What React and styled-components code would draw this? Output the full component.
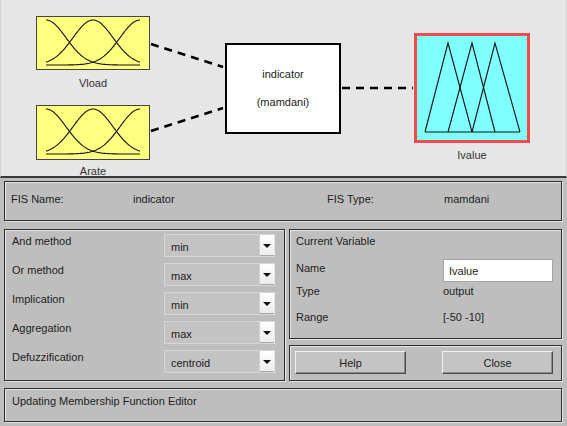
import React from 'react'
import styled, { createGlobalStyle } from 'styled-components'

const Global = createGlobalStyle`
  html, body { margin: 0; padding: 0; background: #bdbdbd; }
  body { font-family: "Liberation Sans", Arial, sans-serif; font-size: 11px; color: #222; }
`;

const Window = styled.div`
  width: 567px;
  height: 426px;
  display: flex;
  flex-direction: column;
  overflow: hidden;
  background: #bdbdbd;
`;

const Diagram = styled.div`
  position: relative;
  height: 176px;
  flex: none;
  background: #e6e6e6;
  border: 1px solid #d2d2d2;
  border-bottom: 2px solid #3a3a3a;
  box-sizing: content-box;
  margin-top: -1px;
`;

const Wires = styled.svg`
  position: absolute;
  left: 0;
  top: 0;
  width: 567px;
  height: 176px;
`;

const Node = styled.div`
  position: absolute;
  left: ${p => p.x}px;
  top: ${p => p.y}px;
  width: ${p => p.w}px;
  height: ${p => p.h}px;
  box-sizing: border-box;
  background: ${p => p.fill};
  border: ${p => p.border};
`;

const NodeLabel = styled.div`
  position: absolute;
  left: ${p => p.x - 40}px;
  top: ${p => p.y}px;
  width: 80px;
  text-align: center;
  color: #333;
  font-size: 11px;
  line-height: 12px;
`;

const SystemText = styled.div`
  display: flex;
  flex-direction: column;
  align-items: center;
  gap: 16px;
  padding-top: 23px;
  font-size: 11px;
  color: #222;
`;

const Lower = styled.div`
  flex: 1;
  display: flex;
  flex-direction: column;
  padding: 3px 5px 0 4px;
`;

const Panel = styled.div`
  box-sizing: border-box;
  border: 1px solid #2e2e2e;
  box-shadow: inset 1px 1px 0 #e4e4e4, 1px 1px 0 #e4e4e4;
  background: #bebebe;
`;

const FisPanel = styled(Panel)`
  height: 40px;
  margin-bottom: 7px;
  display: grid;
  grid-template-columns: 122px 194px 117px 1fr;
  padding: 11px 0 0 6px;
`;

const Middle = styled.div`
  height: 154px;
  margin-bottom: 6px;
  display: grid;
  grid-template-columns: 281px 1fr;
  gap: 4px;
`;

const MethodPanel = styled(Panel)`
  margin-top: 1px;
  height: 152px;
  padding: 4px 9px 0 7px;
  display: flex;
  flex-direction: column;
  gap: 6px;
`;

const MethodRow = styled.div`
  display: flex;
  justify-content: space-between;
  align-items: flex-start;
  height: 23px;
`;

const Label = styled.div`
  padding-top: ${p => p.pt || 0}px;
  white-space: nowrap;
`;

const Select = styled.div`
  width: 111px;
  height: 23px;
  box-sizing: border-box;
  border: 1px solid #d6d6d6;
  border-right-color: #e6e6e6;
  background: #c3c3c3;
  display: flex;
  align-items: center;
  padding-left: 6px;
`;

const SelectValue = styled.div`
  flex: 1;
  padding-top: 2px;
`;

const ArrowBtn = styled.div`
  width: 15px;
  height: 21px;
  box-sizing: border-box;
  background: linear-gradient(#ffffff, #ececec);
  border-left: 1px solid #d0d0d0;
  border-bottom: 1px solid #a8a8a8;
  display: flex;
  align-items: center;
  justify-content: center;
  &::after {
    content: '';
    border-left: 4px solid transparent;
    border-right: 4px solid transparent;
    border-top: 4px solid #111;
    margin-top: 2px;
  }
`;

const RightCol = styled.div`
  display: flex;
  flex-direction: column;
  gap: 6px;
  padding-top: 1px;
`;

const VarPanel = styled(Panel)`
  height: 110px;
  padding: 5px 8px 0 6px;
  display: grid;
  grid-template-columns: 147px 1fr;
  grid-template-rows: 24px 24px 25px 24px;
  align-items: start;
`;

const Title = styled.div`
  grid-column: 1 / 3;
`;

const TextInput = styled.div`
  height: 23px;
  box-sizing: border-box;
  background: #fff;
  border: 1px solid #a4a4a4;
  padding: 5px 0 0 5px;
`;

const ButtonPanel = styled(Panel)`
  height: 36px;
  padding: 5px 8px 0 5px;
  display: flex;
  justify-content: space-between;
`;

const Button = styled.div`
  width: 111px;
  height: 23px;
  box-sizing: border-box;
  background: #c4c4c4;
  border: 1px solid #4a4a4a;
  border-top-color: #f0f0f0;
  border-left-color: #f0f0f0;
  box-shadow: inset -1px -1px 0 #8a8a8a;
  display: flex;
  align-items: center;
  justify-content: center;
  font-size: 11px;
`;

const StatusPanel = styled(Panel)`
  height: 34px;
  padding: 6px 0 0 7px;
`;

const gauss = (c, sigma, x0, x1) => {
  const pts = []
  for (let x = x0; x <= x1; x += 1) {
    const y = 49 - 45 * Math.exp(-((x - c) ** 2) / (2 * sigma * sigma))
    pts.push(`${x},${y.toFixed(2)}`)
  }
  return pts.join(' ')
}

const GaussIcon = () => (
  <svg width="112" height="52" viewBox="1 1 112 52" fill="none" stroke="#111" strokeWidth="1.1">
    <polyline points={gauss(10, 20, 10, 104)} />
    <polyline points={gauss(57, 20, 10, 104)} />
    <polyline points={gauss(104, 20, 10, 104)} />
  </svg>
)

const TriIcon = () => (
  <svg width="110" height="104" viewBox="3 3 110 104" fill="none" stroke="#111" strokeWidth="1.1">
    <polyline points="11,99 34,10 58,99" />
    <polyline points="34,99 58,10 81,99" />
    <polyline points="58,99 81,10 106,99" />
    <line x1="11" y1="99" x2="106" y2="99" />
  </svg>
)

const methods = [
  ['And method', 'min'],
  ['Or method', 'max'],
  ['Implication', 'min'],
  ['Aggregation', 'max'],
  ['Defuzzification', 'centroid'],
]

export default function App() {
  return (
    <Window>
      <Global />
      <Diagram>
        <Wires viewBox="0 0 567 176">
          <g stroke="#000" strokeWidth="2.6" strokeDasharray="8 6" fill="none">
            <line x1="150" y1="44" x2="222" y2="67" />
            <line x1="150" y1="131" x2="222" y2="108" />
            <line x1="341" y1="88" x2="412" y2="88" />
          </g>
        </Wires>
        <Node x={35} y={16} w={114} h={54} fill="#ffff80" border="1px solid #444">
          <GaussIcon />
        </Node>
        <NodeLabel x={92} y={77}>Vload</NodeLabel>
        <Node x={35} y={105} w={114} h={55} fill="#ffff80" border="1px solid #444">
          <GaussIcon />
        </Node>
        <NodeLabel x={92} y={165}>Arate</NodeLabel>
        <Node x={224} y={43} w={116} h={91} fill="#fff" border="2px solid #000">
          <SystemText>
            <div>indicator</div>
            <div>(mamdani)</div>
          </SystemText>
        </Node>
        <Node x={413} y={33} w={116} h={110} fill="#80ffff" border="3px solid #f24b4b">
          <TriIcon />
        </Node>
        <NodeLabel x={471} y={149}>Ivalue</NodeLabel>
      </Diagram>
      <Lower>
        <FisPanel>
          <div>FIS Name:</div>
          <div>indicator</div>
          <div>FIS Type:</div>
          <div>mamdani</div>
        </FisPanel>
        <Middle>
          <MethodPanel>
            {methods.map(([label, value]) => (
              <MethodRow key={label}>
                <Label pt={1}>{label}</Label>
                <Select>
                  <SelectValue>{value}</SelectValue>
                  <ArrowBtn />
                </Select>
              </MethodRow>
            ))}
          </MethodPanel>
          <RightCol>
            <VarPanel>
              <Title>Current Variable</Title>
              <Label pt={3}>Name</Label>
              <TextInput>Ivalue</TextInput>
              <Label pt={2}>Type</Label>
              <Label pt={2}>output</Label>
              <Label pt={3}>Range</Label>
              <Label pt={3}>[-50 -10]</Label>
            </VarPanel>
            <ButtonPanel>
              <Button>Help</Button>
              <Button>Close</Button>
            </ButtonPanel>
          </RightCol>
        </Middle>
        <StatusPanel>Updating Membership Function Editor</StatusPanel>
      </Lower>
    </Window>
  )
}
